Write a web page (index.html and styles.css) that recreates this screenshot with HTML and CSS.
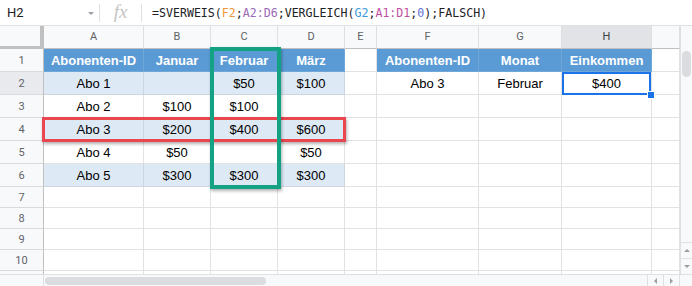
FILE: index.html
```html
<!DOCTYPE html>
<html lang="de">
<head>
    <meta charset="UTF-8">
    <title>SVERWEIS VERGLEICH</title>
    <link rel="stylesheet" href="styles.css">
</head>
<body>
    <div class="formula-bar">
        <div class="name-box">H2</div>
        <span class="caret"></span>
        <div class="fx">fx</div>
        <div class="formula">=SVERWEIS(<span class="r1">F2</span>;<span class="r2">A2:D6</span>;VERGLEICH(<span class="r3">G2</span>;<span class="r4">A1:D1</span>;<span class="num">0</span>);FALSCH)</div>
    </div>

    <div class="main">
        <div class="grid">
            <div class="row head">
                <div class="corner"></div>
                <div class="col">A</div><div class="col">B</div><div class="col">C</div><div class="col">D</div>
                <div class="col">E</div><div class="col">F</div><div class="col">G</div><div class="col sel">H</div><div class="col"></div>
            </div>
            <div class="row">
                <div class="rh">1</div>
                <div class="c hd">Abonenten-ID</div><div class="c hd">Januar</div><div class="c hd">Februar</div><div class="c hd">März</div>
                <div class="c"></div>
                <div class="c hd">Abonenten-ID</div><div class="c hd">Monat</div><div class="c hd">Einkommen</div><div class="c"></div>
            </div>
            <div class="row">
                <div class="rh sel">2</div>
                <div class="c band">Abo 1</div><div class="c band"></div><div class="c band">$50</div><div class="c band">$100</div>
                <div class="c"></div>
                <div class="c">Abo 3</div><div class="c">Februar</div><div class="c">$400</div><div class="c"></div>
            </div>
            <div class="row">
                <div class="rh">3</div>
                <div class="c">Abo 2</div><div class="c">$100</div><div class="c">$100</div><div class="c"></div>
                <div class="c"></div><div class="c"></div><div class="c"></div><div class="c"></div><div class="c"></div>
            </div>
            <div class="row">
                <div class="rh">4</div>
                <div class="c band">Abo 3</div><div class="c band">$200</div><div class="c band">$400</div><div class="c band">$600</div>
                <div class="c"></div><div class="c"></div><div class="c"></div><div class="c"></div><div class="c"></div>
            </div>
            <div class="row">
                <div class="rh">5</div>
                <div class="c">Abo 4</div><div class="c">$50</div><div class="c"></div><div class="c">$50</div>
                <div class="c"></div><div class="c"></div><div class="c"></div><div class="c"></div><div class="c"></div>
            </div>
            <div class="row">
                <div class="rh">6</div>
                <div class="c band">Abo 5</div><div class="c band">$300</div><div class="c band">$300</div><div class="c band">$300</div>
                <div class="c"></div><div class="c"></div><div class="c"></div><div class="c"></div><div class="c"></div>
            </div>
            <div class="row short">
                <div class="rh">7</div>
                <div class="c"></div><div class="c"></div><div class="c"></div><div class="c"></div>
                <div class="c"></div><div class="c"></div><div class="c"></div><div class="c"></div><div class="c"></div>
            </div>
            <div class="row short">
                <div class="rh">8</div>
                <div class="c"></div><div class="c"></div><div class="c"></div><div class="c"></div>
                <div class="c"></div><div class="c"></div><div class="c"></div><div class="c"></div><div class="c"></div>
            </div>
            <div class="row short">
                <div class="rh">9</div>
                <div class="c"></div><div class="c"></div><div class="c"></div><div class="c"></div>
                <div class="c"></div><div class="c"></div><div class="c"></div><div class="c"></div><div class="c"></div>
            </div>
            <div class="row short">
                <div class="rh">10</div>
                <div class="c"></div><div class="c"></div><div class="c"></div><div class="c"></div>
                <div class="c"></div><div class="c"></div><div class="c"></div><div class="c"></div><div class="c"></div>
            </div>
            <div class="row short">
                <div class="rh"></div>
                <div class="c"></div><div class="c"></div><div class="c"></div><div class="c"></div>
                <div class="c"></div><div class="c"></div><div class="c"></div><div class="c"></div><div class="c"></div>
            </div>

            <!-- highlight boxes over the data -->
            <div class="box-red"></div>
            <div class="box-green"></div>
            <div class="selection"></div>
            <div class="handle"></div>
        </div>

        <div class="vscroll">
            <div class="vthumb"></div>
            <div class="vbtns">
                <div class="btn"><span class="tri up"></span></div>
                <div class="btn"><span class="tri down"></span></div>
            </div>
        </div>
    </div>

    <div class="hscroll">
        <div class="hs-corner"></div>
        <div class="htrack"><div class="hthumb"></div></div>
        <div class="btn"><span class="tri left"></span></div>
        <div class="btn"><span class="tri right"></span></div>
        <div class="hs-end"></div>
    </div>
</body>
</html>
```

FILE: styles.css
```css
* {
    margin: 0;
    padding: 0;
    box-sizing: border-box;
}

body {
    width: 692px;
    height: 286px;
    overflow: hidden;
    background: #fff;
    font-family: "Liberation Sans", Arial, sans-serif;
}

/* formula bar */
.formula-bar {
    height: 26px;
    display: flex;
    align-items: center;
    border-bottom: 1px solid #e0e0e0;
    position: relative;
}

.name-box {
    width: 100px;
    height: 18px;
    padding-left: 7px;
    font-family: Roboto, sans-serif;
    font-size: 13px;
    line-height: 18px;
    color: #202124;
    border-right: 1px solid #e0e0e0;
}

.caret {
    position: absolute;
    left: 88px;
    top: 12px;
    border-left: 3px solid transparent;
    border-right: 3px solid transparent;
    border-top: 3px solid #9aa0a6;
}

.fx {
    width: 42px;
    height: 18px;
    text-align: center;
    font-family: "Liberation Serif", serif;
    font-style: italic;
    font-size: 19px;
    line-height: 16px;
    color: #c4c4c4;
    border-right: 1px solid #e0e0e0;
}

.formula {
    padding-left: 10px;
    font-family: "DejaVu Sans Mono", monospace;
    font-size: 11.6px;
    color: #202124;
    letter-spacing: 0;
}

.r1 { color: #f0963c; }
.r2 { color: #9b6ab7; }
.r3 { color: #3d9ad8; }
.r4 { color: #c2509e; }
.num { color: #5c6fd6; }

/* sheet */
.main {
    display: flex;
    height: 248px;
}

.grid {
    width: 680px;
    height: 248px;
    overflow: hidden;
    position: relative;
}

.row {
    display: grid;
    grid-template-columns: 44px 100px 67px 67px 67px 32px 102px 83px 90px 28px;
    height: 23px;
}

.row.short {
    height: 21px;
}

.corner {
    background: #f8f9fa;
    border-right: 4px solid #c0c0c0;
    border-bottom: 3px solid #c0c0c0;
}

.col {
    background: #f8f9fa;
    border-right: 1px solid #e0e0e0;
    border-bottom: 1px solid #c0c0c0;
    font-family: Roboto, sans-serif;
    font-size: 11px;
    line-height: 22px;
    text-align: center;
    color: #5f6368;
}

.col.sel {
    background: #e1e3e6;
    color: #3c4043;
}

.rh {
    background: #f8f9fa;
    border-right: 1px solid #c0c0c0;
    border-bottom: 1px solid #dadada;
    font-family: Roboto, sans-serif;
    font-size: 11px;
    text-align: center;
    color: #5f6368;
    display: flex;
    align-items: center;
    justify-content: center;
}

.rh.sel {
    background: #e8eaed;
}

.c {
    border-right: 1px solid #e2e2e2;
    border-bottom: 1px solid #e2e2e2;
    font-size: 13px;
    color: #000;
    text-align: center;
    display: flex;
    align-items: center;
    justify-content: center;
}

.c.hd {
    background: #5b9bd5;
    color: #fff;
    font-weight: bold;
    border-color: #6fa7d9;
}

.c.band {
    background: #dde9f5;
    border-color: #cdd6df;
}

.box-red {
    position: absolute;
    left: 42px;
    top: 91px;
    width: 304px;
    height: 25px;
    border: 3px solid #ea4650;
    box-shadow: 1px 2px 3px rgba(0,0,0,0.3);
}

.box-green {
    position: absolute;
    left: 210px;
    top: 21px;
    width: 71px;
    height: 142px;
    border: 4px solid #14a284;
    box-shadow: 1px 2px 3px rgba(0,0,0,0.3);
}

.selection {
    position: absolute;
    left: 562px;
    top: 46px;
    width: 89px;
    height: 23px;
    border: 2px solid #1a73e8;
}

.handle {
    position: absolute;
    left: 647px;
    top: 65px;
    width: 8px;
    height: 8px;
    background: #1a73e8;
    border: 1px solid #fff;
}

/* scrollbars */
.vscroll {
    width: 12px;
    background: #f8f9fa;
    border-left: 1px solid #e0e0e0;
    display: flex;
    flex-direction: column;
    justify-content: space-between;
    padding-top: 25px;
}

.vthumb {
    width: 9px;
    height: 26px;
    margin-left: 1px;
    background: #dadce0;
    border-radius: 5px;
}

.vbtns .btn {
    height: 16px;
    border-top: 1px solid #e0e0e0;
}

.hscroll {
    height: 12px;
    display: flex;
    background: #f8f9fa;
    border-top: 1px solid #e0e0e0;
}

.hs-corner {
    width: 44px;
    border-right: 1px solid #e0e0e0;
}

.htrack {
    width: 603px;
    padding: 2px 0 0 1px;
}

.hthumb {
    width: 221px;
    height: 8px;
    background: #dadce0;
    border-radius: 4px;
}

.hscroll .btn {
    width: 16px;
    border-left: 1px solid #e0e0e0;
}

.hs-end {
    width: 13px;
    border-left: 1px solid #e0e0e0;
}

.btn {
    display: flex;
    align-items: center;
    justify-content: center;
}

.tri {
    width: 0;
    height: 0;
}

.tri.up {
    border-left: 3px solid transparent;
    border-right: 3px solid transparent;
    border-bottom: 3px solid #9e9e9e;
}

.tri.down {
    border-left: 3px solid transparent;
    border-right: 3px solid transparent;
    border-top: 3px solid #9e9e9e;
}

.tri.left {
    border-top: 3px solid transparent;
    border-bottom: 3px solid transparent;
    border-right: 3px solid #9e9e9e;
}

.tri.right {
    border-top: 3px solid transparent;
    border-bottom: 3px solid transparent;
    border-left: 3px solid #9e9e9e;
}
```
